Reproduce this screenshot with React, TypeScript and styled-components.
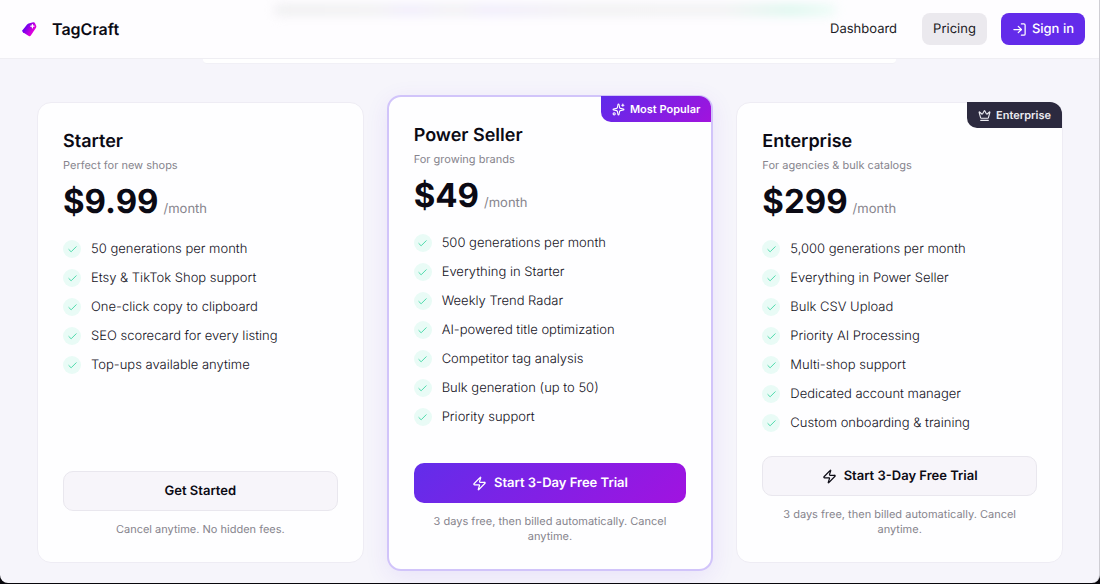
import React from "react";
import styled, { createGlobalStyle, css } from "styled-components";
import { Check, Crown, LogIn, Sparkles, Zap } from "lucide-react";

const GlobalStyle = createGlobalStyle`
  *, *::before, *::after { box-sizing: border-box; }
  body {
    margin: 0;
    background: #08070c;
    font-family: Inter, "Liberation Sans", sans-serif;
    color: #0b0a14;
    -webkit-font-smoothing: antialiased;
    text-rendering: geometricPrecision;
  }
  h2, p, ul { margin: 0; padding: 0; }
  button { font-family: inherit; cursor: pointer; text-rendering: inherit; }
`;

const Page = styled.div`
  min-height: calc(100vh - 2px);
  background: #f6f5fb;
  border-right: 1px solid #cfced4;
  border-radius: 0 0 8px 8px;
  overflow: hidden;
`;

const Header = styled.header`
  position: relative;
  display: flex;
  align-items: center;
  justify-content: space-between;
  height: 59px;
  padding: 0 14px 0 21px;
  background: #fefdff;
  border-bottom: 1px solid #efeef3;
`;

const Backdrop = styled.div`
  position: absolute;
  top: 6px;
  left: 25%;
  right: 24%;
  height: 8px;
  filter: blur(6px);
  background: linear-gradient(90deg, #e9e9ea, #ececed 18%, #ebe5fb 24%, #ededee 32%, #ebe5fb 38%, #ececed 56%, #ededee 80%, #cdf5e6 92%, #e6fbf3);
`;

const Brand = styled.a`
  position: relative;
  display: flex;
  align-items: center;
  gap: 14px;
  color: #0b0a14;
  font-size: 16px;
  font-weight: 600;
  line-height: 20px;
  text-decoration: none;
`;

const Nav = styled.nav`
  position: relative;
  display: flex;
  align-items: center;
  gap: 14px;
`;

const NavLink = styled.a<{ $active?: boolean }>`
  display: flex;
  align-items: center;
  height: 32px;
  padding: 0 11px;
  border-radius: 8px;
  background: ${(p) => (p.$active ? "#ebe9ee" : "transparent")};
  color: #1d1b26;
  font-size: 13px;
  text-decoration: none;
`;

const SignIn = styled.button`
  display: flex;
  align-items: center;
  gap: 5px;
  height: 32px;
  padding: 0 11px;
  border: 0;
  border-radius: 8px;
  background: #632bea;
  color: #fff;
  font-size: 13px;
  font-weight: 500;
`;

const PanelEdge = styled.div`
  width: 63%;
  height: 5px;
  margin: 0 auto;
  background: #fff;
  border-bottom: 1px solid #f1f0f6;
  border-radius: 0 0 4px 4px;
`;

const Plans = styled.main`
  display: grid;
  grid-template-columns: repeat(3, 1fr);
  gap: 23px;
  padding: 38px 36px 20px 37px;
`;

const Card = styled.section<{ $featured?: boolean }>`
  position: relative;
  display: flex;
  flex-direction: column;
  padding: 27px 25px 25px;
  border: 1px solid #eeecf4;
  border-radius: 14px;
  background: #fefeff;
  ${(p) =>
    p.$featured &&
    css`
      margin: -7px 0 -8px;
      border: 2px solid #d1c4fa;
      box-shadow: 0 6px 24px rgba(99, 43, 234, 0.09);
    `}
`;

const Badge = styled.span<{ $dark?: boolean }>`
  position: absolute;
  top: -1px;
  right: 0;
  display: flex;
  align-items: center;
  gap: 5px;
  height: 26px;
  padding: 0 11px;
  border-radius: 0 12px 0 10px;
  background: ${(p) => (p.$dark ? "#2c2a3f" : "linear-gradient(135deg, #5f2bea, #a113dd)")};
  color: ${(p) => (p.$dark ? "#ececf2" : "#fff")};
  font-size: 11px;
  font-weight: 600;
`;

const Title = styled.h2`
  font-size: 18px;
  font-weight: 600;
  line-height: 24px;
`;

const Subtitle = styled.p`
  margin-top: 3px;
  color: #86848d;
  font-size: 11px;
  line-height: 16px;
`;

const Price = styled.p`
  display: flex;
  align-items: baseline;
  gap: 5px;
  margin-top: 8px;
  font-size: 33px;
  font-weight: 700;
  line-height: 40px;
`;

const Period = styled.span`
  color: #86848d;
  font-size: 13px;
  font-weight: 400;
`;

const Features = styled.ul`
  display: grid;
  gap: 9px;
  margin-top: 10px;
  margin-bottom: 23px;
  list-style: none;
`;

const Feature = styled.li`
  display: flex;
  align-items: center;
  gap: 10px;
  color: #14121d;
  font-size: 13px;
  font-weight: 300;
  line-height: 20px;
`;

const Tick = styled.span`
  display: grid;
  place-items: center;
  width: 18px;
  height: 18px;
  border-radius: 50%;
  background: #e9fbf6;
  color: #3fd6a4;
`;

const Action = styled.button<{ $featured?: boolean }>`
  display: flex;
  align-items: center;
  justify-content: center;
  gap: 7px;
  height: 40px;
  margin-top: auto;
  border: 1px solid #e9e7ee;
  border-radius: 10px;
  background: #f7f5fa;
  color: #0b0a14;
  font-size: 13px;
  font-weight: 600;
  ${(p) =>
    p.$featured &&
    css`
      border: 0;
      background: linear-gradient(135deg, #622dea, #a113e0);
      color: #fff;
    `}
`;

const Note = styled.p`
  margin-top: 11px;
  color: #86848d;
  font-size: 11px;
  line-height: 15px;
  text-align: center;
`;

const TagLogo = () => (
  <svg width="17" height="17" viewBox="0 0 17 17" aria-hidden="true">
    <defs>
      <linearGradient id="tag" x1="2" y1="5" x2="13" y2="12" gradientUnits="userSpaceOnUse">
        <stop offset="0.1" stopColor="#5a00f0" />
        <stop offset="0.8" stopColor="#dc00dc" />
      </linearGradient>
    </defs>
    <path
      d="M7.6 2.6 12.2 1.3Q13.4 1 13.9 2L15.2 4.8Q15.6 5.8 15 6.8L9.8 14.6Q9 15.7 7.8 15L1.9 11.3Q.8 10.5 1.5 9.3L5.9 3.7Q6.6 2.9 7.6 2.6Z"
      fill="url(#tag)"
    />
    <path d="M11.4 3.6v3.2M9.8 5.2h3.2" stroke="#fff" strokeWidth="1.2" strokeLinecap="round" />
  </svg>
);

interface Plan {
  name: string;
  subtitle: string;
  price: string;
  features: string[];
  action: string;
  note: string;
  trial?: boolean;
  featured?: boolean;
  badge?: React.ReactNode;
}

const trialNote = "3 days free, then billed automatically. Cancel anytime.";

const plans: Plan[] = [
  {
    name: "Starter",
    subtitle: "Perfect for new shops",
    price: "$9.99",
    features: [
      "50 generations per month",
      "Etsy & TikTok Shop support",
      "One-click copy to clipboard",
      "SEO scorecard for every listing",
      "Top-ups available anytime",
    ],
    action: "Get Started",
    note: "Cancel anytime. No hidden fees.",
  },
  {
    name: "Power Seller",
    subtitle: "For growing brands",
    price: "$49",
    features: [
      "500 generations per month",
      "Everything in Starter",
      "Weekly Trend Radar",
      "AI-powered title optimization",
      "Competitor tag analysis",
      "Bulk generation (up to 50)",
      "Priority support",
    ],
    action: "Start 3-Day Free Trial",
    note: trialNote,
    trial: true,
    featured: true,
    badge: (
      <Badge>
        <Sparkles size={13} />
        Most Popular
      </Badge>
    ),
  },
  {
    name: "Enterprise",
    subtitle: "For agencies & bulk catalogs",
    price: "$299",
    features: [
      "5,000 generations per month",
      "Everything in Power Seller",
      "Bulk CSV Upload",
      "Priority AI Processing",
      "Multi-shop support",
      "Dedicated account manager",
      "Custom onboarding & training",
    ],
    action: "Start 3-Day Free Trial",
    note: trialNote,
    trial: true,
    badge: (
      <Badge $dark>
        <Crown size={13} />
        Enterprise
      </Badge>
    ),
  },
];

export default function App() {
  return (
    <>
      <GlobalStyle />
      <Page>
        <Header>
          <Backdrop />
          <Brand href="#">
            <TagLogo />
            TagCraft
          </Brand>
          <Nav>
            <NavLink href="#">Dashboard</NavLink>
            <NavLink href="#" $active aria-current="page">
              Pricing
            </NavLink>
            <SignIn type="button">
              <LogIn size={15} />
              Sign in
            </SignIn>
          </Nav>
        </Header>
        <PanelEdge />
        <Plans>
          {plans.map((plan) => (
            <Card key={plan.name} $featured={plan.featured}>
              {plan.badge}
              <Title>{plan.name}</Title>
              <Subtitle>{plan.subtitle}</Subtitle>
              <Price>
                {plan.price}
                <Period>/month</Period>
              </Price>
              <Features>
                {plan.features.map((feature) => (
                  <Feature key={feature}>
                    <Tick>
                      <Check size={11} />
                    </Tick>
                    {feature}
                  </Feature>
                ))}
              </Features>
              <Action type="button" $featured={plan.featured}>
                {plan.trial && <Zap size={15} />}
                {plan.action}
              </Action>
              <Note>{plan.note}</Note>
            </Card>
          ))}
        </Plans>
      </Page>
    </>
  );
}
